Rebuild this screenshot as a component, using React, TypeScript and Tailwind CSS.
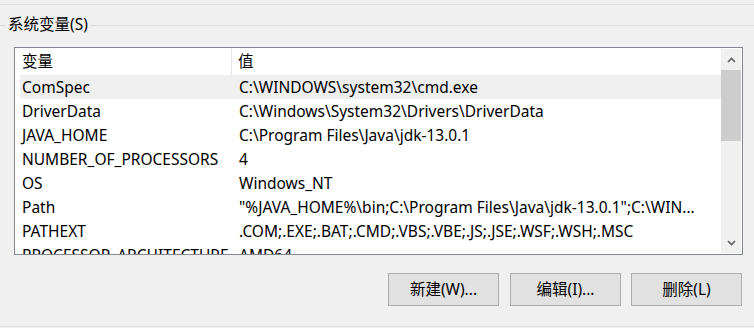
import React from "react";

const rows: [string, string][] = [
  ["ComSpec", "C:\\WINDOWS\\system32\\cmd.exe"],
  ["DriverData", "C:\\Windows\\System32\\Drivers\\DriverData"],
  ["JAVA_HOME", "C:\\Program Files\\Java\\jdk-13.0.1"],
  ["NUMBER_OF_PROCESSORS", "4"],
  ["OS", "Windows_NT"],
  ["Path", "\"%JAVA_HOME%\\bin;C:\\Program Files\\Java\\jdk-13.0.1\";C:\\WIN..."],
  ["PATHEXT", ".COM;.EXE;.BAT;.CMD;.VBS;.VBE;.JS;.JSE;.WSF;.WSH;.MSC"],
  ["PROCESSOR_ARCHITECTURE", "AMD64"],
];

const font = "font-['Noto_Sans','Noto_Sans_CJK_SC',sans-serif]";

function Chevron({ up }: { up?: boolean }) {
  return (
    <svg width="9" height="6" viewBox="0 0 9 6" aria-hidden="true">
      <path
        d={up ? "M1 5 L4.5 1.5 L8 5" : "M1 1 L4.5 4.5 L8 1"}
        fill="none"
        stroke="#606060"
        strokeWidth="1.6"
      />
    </svg>
  );
}

function Btn({ label }: { label: string }) {
  return (
    <button className="w-[111px] h-[33px] bg-[#e1e1e1] border border-[#adadad] text-[15.5px] text-black leading-none">
      {label}
    </button>
  );
}

export default function App() {
  return (
    <div className={`w-[754px] h-[328px] bg-[#f0f0f0] overflow-hidden text-black ${font}`}>
      <div className="h-[5px] border-b border-[#dcdcdc]" />

      {/* group box title */}
      <div className="mt-[12px] h-[16px] flex items-center">
        <div className="w-[6px] h-px bg-[#dcdcdc]" />
        <span className="px-[2px] text-[15.5px] leading-none">系统变量(S)</span>
        <div className="flex-1 h-px bg-[#dcdcdc]" />
      </div>

      {/* list */}
      <div className="ml-[14px] mt-[14px] w-[729px] h-[208px] border border-[#828790] bg-white flex">
        <div className="flex-1 overflow-hidden">
          <div className="h-[27px] flex items-center text-[15.5px]">
            <div className="w-[217px] pl-[7px] h-full flex items-center border-r border-[#e5e5e5]">变量</div>
            <div className="pl-[6px]">值</div>
          </div>
          <div className="ml-[5px]">
            {rows.map(([k, v], i) => (
              <div
                key={k}
                className={`h-[24px] pt-[2px] flex items-center text-[15.5px] whitespace-nowrap ${i === 0 ? "bg-[#efefef]" : ""}`}
              >
                <div className="w-[212px] pl-[2px]">{k}</div>
                <div className="pl-[7px]">{v}</div>
              </div>
            ))}
          </div>
        </div>
        <div className="w-[20px] my-px mr-px bg-[#f0f0f0] flex flex-col">
          <div className="h-[21px] flex items-center justify-center">
            <Chevron up />
          </div>
          <div className="h-[71px] bg-[#cdcdcd]" />
          <div className="flex-1" />
          <div className="h-[21px] flex items-center justify-center">
            <Chevron />
          </div>
        </div>
      </div>

      {/* buttons */}
      <div className="mt-[18px] flex justify-end pr-[12px]">
        <Btn label="新建(W)..." />
        <div className="w-[11px]" />
        <Btn label="编辑(I)..." />
        <div className="w-[10px]" />
        <Btn label="删除(L)" />
      </div>

      <div className="mt-[20px] h-px bg-[#dcdcdc]" />
    </div>
  );
}
